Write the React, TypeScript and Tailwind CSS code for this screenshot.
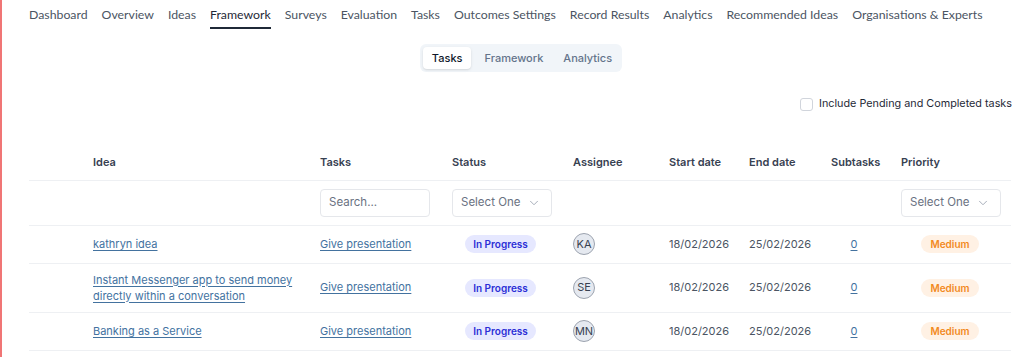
import { ChevronDown } from 'lucide-react'

const NAV = [
  'Dashboard',
  'Overview',
  'Ideas',
  'Framework',
  'Surveys',
  'Evaluation',
  'Tasks',
  'Outcomes Settings',
  'Record Results',
  'Analytics',
  'Recommended Ideas',
  'Organisations & Experts',
]

const ROWS = [
  { idea: 'kathryn idea', initials: 'KA', tall: false },
  { idea: 'Instant Messenger app to send money directly within a conversation', initials: 'SE', tall: true },
  { idea: 'Banking as a Service', initials: 'MN', tall: false },
]

const COLS = [52, 227, 132, 121, 96, 80, 82, 70, 122]

function SelectBox() {
  return (
    <div className="flex items-center justify-between w-[100px] h-[28px] border border-gray-200 rounded-[4px] pl-[8px] pr-[10px] text-[11.5px] text-gray-500 bg-white">
      <span>Select One</span>
      <ChevronDown className="w-3.5 h-3.5 text-gray-400" strokeWidth={1.5} />
    </div>
  )
}

export default function App() {
  return (
    <div className="h-[357px] bg-white border-l-2 border-[#f07575] font-['Inter',sans-serif] overflow-hidden">
      {/* top nav */}
      <div className="flex gap-[14px] pl-[27px] font-['Lato',sans-serif] text-[12.3px] whitespace-nowrap">
        {NAV.map((n) => (
          <div
            key={n}
            className={`pt-[6px] pb-[3px] leading-[18px] border-b-2 ${
              n === 'Framework' ? 'border-[#1f2937] text-[#1f2937]' : 'border-transparent text-[#4b5563]'
            }`}
          >
            {n}
          </div>
        ))}
      </div>

      {/* segmented tabs */}
      <div className="flex justify-center mt-[15px] pl-[16px]">
        <div className="flex bg-[#f1f5f9] rounded-[6px] p-[3px] gap-[1px]">
          <div className="h-[22px] px-[9px] flex items-center bg-white rounded-[4px] shadow-sm text-[11px] font-medium text-[#0f172a]">
            Tasks
          </div>
          <div className="h-[22px] px-[12px] flex items-center text-[11px] font-medium text-[#64748b]">Framework</div>
          <div className="h-[22px] px-[7px] flex items-center text-[11px] font-medium text-[#64748b]">Analytics</div>
        </div>
      </div>

      {/* include pending */}
      <div className="flex justify-end items-center gap-[6px] pr-[12px] mt-[24px]">
        <span className="w-[13px] h-[13px] border border-gray-300 rounded-[3px] bg-white" />
        <span className="text-[10.8px] text-[#1f2937]">Include Pending and Completed tasks</span>
      </div>

      {/* table */}
      <table className="ml-[27px] mt-[32px] table-fixed border-collapse w-[982px]">
        <colgroup>
          {COLS.map((w, i) => (
            <col key={i} style={{ width: w }} />
          ))}
        </colgroup>
        <thead>
          <tr className="h-[36px] border-b border-[#eef0f3] text-left text-[11px] text-[#374151] whitespace-nowrap">
            <th />
            <th className="px-[12px] font-semibold">Idea</th>
            <th className="px-[12px] font-semibold">Tasks</th>
            <th className="px-[12px] font-semibold">Status</th>
            <th className="px-[12px] font-semibold">Assignee</th>
            <th className="px-[12px] font-semibold">Start date</th>
            <th className="px-[12px] font-semibold">End date</th>
            <th className="px-[12px] font-semibold">Subtasks</th>
            <th className="px-[12px] font-semibold">Priority</th>
          </tr>
          <tr className="h-[45px] border-b border-[#eef0f3]">
            <td />
            <td />
            <td className="px-[12px]">
              <div className="w-[110px] h-[28px] border border-gray-200 rounded-[4px] pl-[8px] flex items-center text-[11.5px] text-gray-500">
                Search...
              </div>
            </td>
            <td className="px-[12px]">
              <SelectBox />
            </td>
            <td />
            <td />
            <td />
            <td />
            <td className="px-[12px]">
              <SelectBox />
            </td>
          </tr>
        </thead>
        <tbody>
          {ROWS.map((r) => (
            <tr key={r.idea} className={`${r.tall ? 'h-[49px]' : 'h-[38px]'} border-b border-[#eef0f3] text-[11px]`}>
              <td />
              <td className="px-[12px] leading-[16px]">
                <a className="text-[#43729f] underline underline-offset-2">{r.idea}</a>
              </td>
              <td className="px-[12px]">
                <a className="text-[#43729f] underline underline-offset-2">Give presentation</a>
              </td>
              <td className="text-center">
                <span className="inline-block px-[8px] py-[3px] leading-[12px] rounded-full bg-[#e6e8ff] text-[#2b2fd6] text-[10px] font-semibold">
                  In Progress
                </span>
              </td>
              <td className="px-[12px]">
                <span className="w-[22px] h-[22px] rounded-full border border-[#9ca3af] bg-[#e5e9f0] flex items-center justify-center text-[11px] text-[#374151]">
                  {r.initials}
                </span>
              </td>
              <td className="px-[12px] text-[#4b5563]">18/02/2026</td>
              <td className="px-[12px] text-[#4b5563]">25/02/2026</td>
              <td className="text-center">
                <a className="text-[#43729f] underline underline-offset-2">0</a>
              </td>
              <td className="text-center">
                <span className="inline-block px-[9px] py-[3px] leading-[12px] rounded-full bg-[#fff1e4] text-[#f28a1e] text-[10px] font-semibold">
                  Medium
                </span>
              </td>
            </tr>
          ))}
        </tbody>
      </table>
    </div>
  )
}
